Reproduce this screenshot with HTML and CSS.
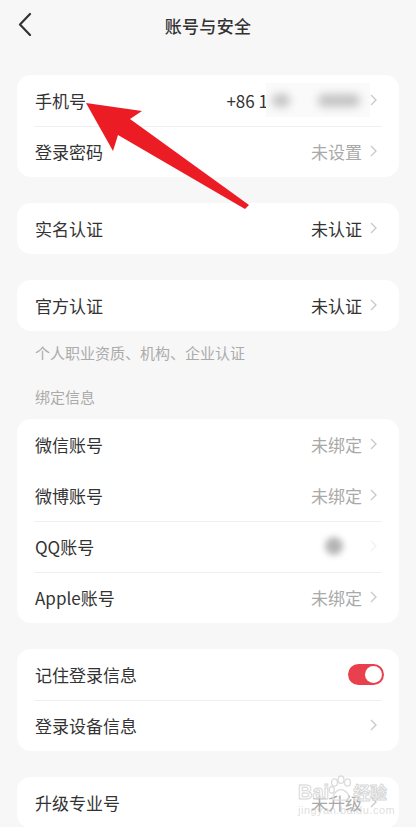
FILE: index.html
```html
<!DOCTYPE html>
<html lang="zh-CN">
<head>
<meta charset="utf-8">
<title>账号与安全</title>
<link rel="stylesheet" href="styles.css">
</head>
<body>
<div class="page">
  <header class="nav">
    <svg class="back" width="14" height="24" viewBox="0 0 14 24"><polyline points="12,2 2,12.5 12,23" fill="none" stroke="#333" stroke-width="2.2" stroke-linecap="round" stroke-linejoin="round"/></svg>
    <h1 class="title">账号与安全</h1>
  </header>

  <section class="card first">
    <div class="row">
      <span class="label">手机号</span>
      <span class="value dark">+86 1<span class="blurbox"><span class="smudge s1"></span><span class="smudge s2"></span></span></span>
      <svg class="chev" width="7" height="12" viewBox="0 0 7 12"><polyline points="1,1 6,6 1,11" fill="none" stroke="#c8c8c8" stroke-width="1.3"/></svg>
    </div>
    <div class="divider"></div>
    <div class="row">
      <span class="label">登录密码</span>
      <span class="value">未设置</span>
      <svg class="chev" width="7" height="12" viewBox="0 0 7 12"><polyline points="1,1 6,6 1,11" fill="none" stroke="#c8c8c8" stroke-width="1.3"/></svg>
    </div>
  </section>

  <section class="card">
    <div class="row">
      <span class="label">实名认证</span>
      <span class="value dark">未认证</span>
      <svg class="chev" width="7" height="12" viewBox="0 0 7 12"><polyline points="1,1 6,6 1,11" fill="none" stroke="#c8c8c8" stroke-width="1.3"/></svg>
    </div>
  </section>

  <section class="card">
    <div class="row">
      <span class="label">官方认证</span>
      <span class="value dark">未认证</span>
      <svg class="chev" width="7" height="12" viewBox="0 0 7 12"><polyline points="1,1 6,6 1,11" fill="none" stroke="#c8c8c8" stroke-width="1.3"/></svg>
    </div>
  </section>
  <p class="note">个人职业资质、机构、企业认证</p>
  <p class="section-title">绑定信息</p>

  <section class="card tight">
    <div class="row">
      <span class="label">微信账号</span>
      <span class="value">未绑定</span>
      <svg class="chev" width="7" height="12" viewBox="0 0 7 12"><polyline points="1,1 6,6 1,11" fill="none" stroke="#c8c8c8" stroke-width="1.3"/></svg>
    </div>
    <div class="row">
      <span class="label">微博账号</span>
      <span class="value">未绑定</span>
      <svg class="chev" width="7" height="12" viewBox="0 0 7 12"><polyline points="1,1 6,6 1,11" fill="none" stroke="#c8c8c8" stroke-width="1.3"/></svg>
    </div>
    <div class="divider"></div>
    <div class="row">
      <span class="label">QQ账号</span>
      <span class="qqblur"><span class="blob"></span></span>
      <svg class="chev faint" width="7" height="12" viewBox="0 0 7 12"><polyline points="1,1 6,6 1,11" fill="none" stroke="#c8c8c8" stroke-width="1.3"/></svg>
    </div>
    <div class="divider"></div>
    <div class="row">
      <span class="label">Apple账号</span>
      <span class="value">未绑定</span>
      <svg class="chev" width="7" height="12" viewBox="0 0 7 12"><polyline points="1,1 6,6 1,11" fill="none" stroke="#c8c8c8" stroke-width="1.3"/></svg>
    </div>
  </section>

  <section class="card">
    <div class="row">
      <span class="label">记住登录信息</span>
      <span class="toggle"><span class="knob"></span></span>
    </div>
    <div class="divider"></div>
    <div class="row">
      <span class="label">登录设备信息</span>
      <svg class="chev" width="7" height="12" viewBox="0 0 7 12"><polyline points="1,1 6,6 1,11" fill="none" stroke="#c8c8c8" stroke-width="1.3"/></svg>
    </div>
  </section>

  <section class="card last">
    <div class="row">
      <span class="label">升级专业号</span>
      <span class="value">未升级</span>
      <svg class="chev" width="7" height="12" viewBox="0 0 7 12"><polyline points="1,1 6,6 1,11" fill="none" stroke="#c8c8c8" stroke-width="1.3"/></svg>
    </div>
  </section>

  <div class="watermark">
    <div class="wm-top"><span class="wm-bai">Bai</span><svg class="paw" width="26" height="30" viewBox="0 0 28 30"><g fill="none" stroke="#dcdcdc" stroke-width="1.4"><ellipse cx="7" cy="8" rx="3.2" ry="4"/><ellipse cx="14" cy="5" rx="3.2" ry="4"/><ellipse cx="21" cy="8" rx="3.2" ry="4"/><ellipse cx="4" cy="16" rx="2.8" ry="3.5"/><path d="M8 27 C4 27 5 20 10 17 C13 15 15 15 18 17 C23 20 24 27 20 27 Z"/></g></svg><span class="wm-cn">经验</span></div>
    <div class="wm-url">jingyan.baidu.com</div>
  </div>

  <svg class="arrow" width="416" height="827" viewBox="0 0 416 827"><polygon points="86,103 142,111 130,119 249,205 245,209 118,135 113,151" fill="#ec1c24"/></svg>
</div>
</body>
</html>
```
FILE: styles.css
```css
* { box-sizing: border-box; }
html, body { margin: 0; padding: 0; }
body {
  background: #f7f7f7;
  font-family: "Noto Sans CJK SC", "Noto Sans", sans-serif;
  color: #333;
  width: 416px;
  height: 827px;
  overflow: hidden;
}
.page { position: relative; width: 416px; height: 827px; }
.nav {
  height: 50px;
  display: flex;
  align-items: center;
  justify-content: center;
  position: relative;
}
.back { position: absolute; left: 18px; top: 12px; }
.title {
  margin: 0;
  font-size: 17px;
  font-weight: 500;
  color: #333;
  letter-spacing: 0.3px;
}
.card {
  background: #fff;
  border-radius: 14px;
  margin: 26px 17px 0;
  overflow: hidden;
}
.card.first { margin-top: 25px; }
.card.tight { margin-top: 11px; }
.card.last { margin-top: 26px; }
.row {
  height: 51px;
  display: flex;
  align-items: center;
  padding: 0 22px 1px 18px;
  font-size: 17px;
}
.label { flex: 1; color: #333; }
.value { color: #a9a9a9; display: flex; align-items: center; }
.value.dark { color: #333; }
.chev { margin-left: 8px; flex: none; }
.chev.faint { opacity: 0.25; }
.divider {
  height: 1px;
  background: #f0f0f0;
  margin: 0 17px -1px;
  position: relative;
}
.blurbox {
  display: inline-flex;
  align-items: center;
  width: 104px;
  height: 34px;
  margin-left: -2px;
  margin-right: -8px;
  background: #fafafa;
  position: relative;
  z-index: 1;
  overflow: hidden;
  padding-left: 6px;
}
.smudge {
  height: 13px;
  border-radius: 6px;
  background: #c4c4c4;
  filter: blur(4px);
}
.s1 { width: 18px; }
.s2 { width: 42px; margin-left: 28px; }
.qqblur {
  width: 44px;
  height: 34px;
  display: flex;
  align-items: center;
  justify-content: center;
  margin-right: 6px;
}
.blob {
  width: 18px;
  height: 18px;
  border-radius: 50%;
  background: #b5b5b5;
  filter: blur(3px);
}
.note {
  margin: 0;
  padding: 11px 35px 0;
  font-size: 15px;
  line-height: 22px;
  color: #ababab;
}
.section-title {
  margin: 22px 0 0;
  padding: 0 35px;
  font-size: 15px;
  line-height: 22px;
  color: #ababab;
}
.toggle {
  width: 36px;
  height: 21px;
  border-radius: 11px;
  background: #e8404c;
  position: relative;
  margin-right: -7px;
  flex: none;
}
.knob {
  position: absolute;
  right: 2px;
  top: 2px;
  width: 17px;
  height: 17px;
  border-radius: 50%;
  background: #fff;
}
.watermark {
  position: absolute;
  left: 298px;
  top: 772px;
  white-space: nowrap;
  pointer-events: none;
}
.wm-top { display: flex; align-items: flex-end; height: 32px; }
.wm-bai, .wm-cn {
  font-family: "Liberation Sans", "Noto Sans CJK SC", sans-serif;
  font-size: 20px;
  font-weight: 700;
  color: rgba(255,255,255,0.3);
  -webkit-text-stroke: 1px #d8d8d8;
  line-height: 24px;
}
.wm-cn { font-size: 17px; font-family: "Noto Sans CJK SC", sans-serif; }
.paw { margin: 0 -1px; }
.wm-url {
  font-family: "Liberation Sans", sans-serif;
  font-size: 11px;
  color: rgba(200,200,200,0.6);
  letter-spacing: 0.5px;
}
.arrow { position: absolute; left: 0; top: 0; pointer-events: none; }
```
